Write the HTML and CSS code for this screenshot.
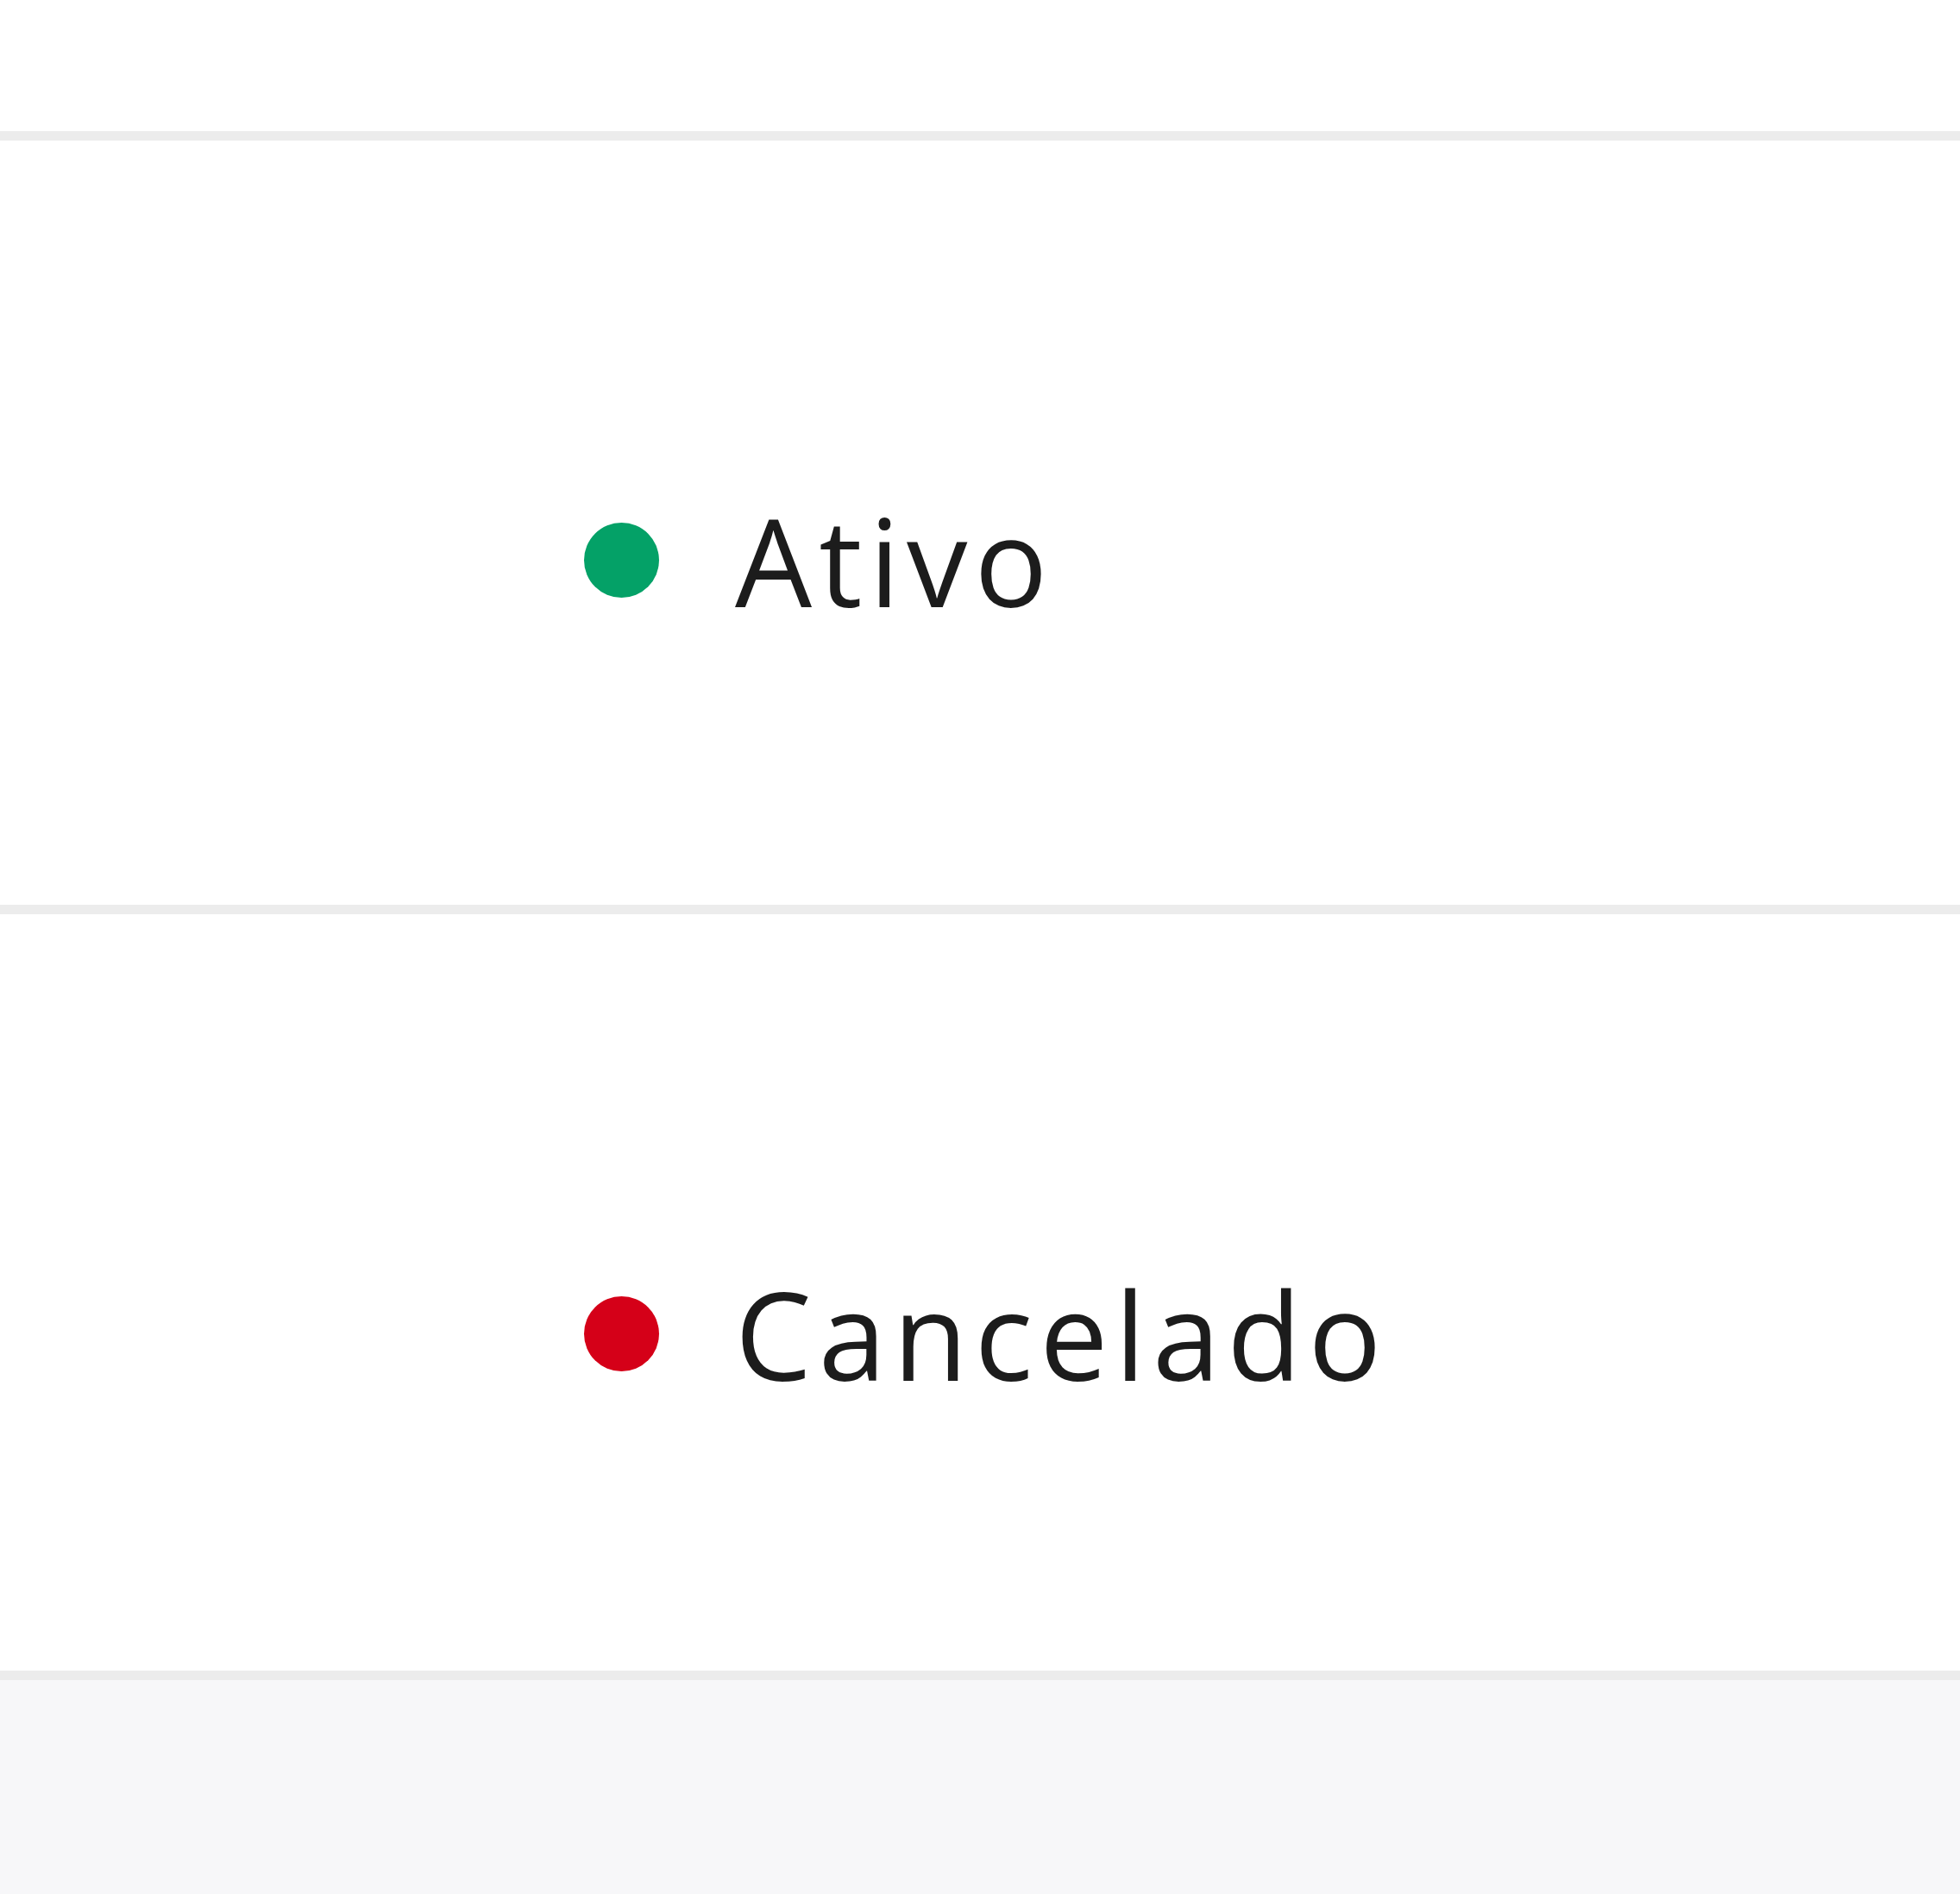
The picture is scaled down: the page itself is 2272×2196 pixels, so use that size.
FILE: index.html
```html
<!DOCTYPE html>
<html lang="pt">

<head>
    <meta charset="UTF-8">
    <meta name="viewport" content="width=device-width, initial-scale=1.0">
    <title>Status</title>
    <link rel="stylesheet" href="styles.css">
</head>

<body>
    <div class="top"></div>
    <ul class="list">
        <li class="row">
            <span class="dot dot-green"></span>
            <span class="label">Ativo</span>
        </li>
        <li class="row">
            <span class="dot dot-red"></span>
            <span class="label">Cancelado</span>
        </li>
    </ul>
    <div class="foot"></div>
</body>

</html>
```

FILE: styles.css
```css
* {
    margin: 0;
    padding: 0;
}

body {
    background-color: #fff;
    font-family: "Open Sans", "Noto Sans", sans-serif;
    color: #1c1c1c;
}

.top {
    height: 152px;
}

.list {
    list-style: none;
    border-bottom: 11px solid #ececec;
}

.row {
    display: flex;
    align-items: center;
    border-top: 11px solid #ececec;
    padding: 399px 0 313px 677px;
}

.row:last-child {
    padding-bottom: 304px;
}

.dot {
    width: 87px;
    height: 87px;
    border-radius: 50%;
    margin-right: 88px;
    flex-shrink: 0;
}

.dot-green {
    background-color: #04a167;
}

.dot-red {
    background-color: #d50018;
}

.label {
    font-size: 141px;
    line-height: 174px;
    letter-spacing: 8px;
}

.foot {
    height: 248px;
    background-color: #f7f7f9;
}
```
